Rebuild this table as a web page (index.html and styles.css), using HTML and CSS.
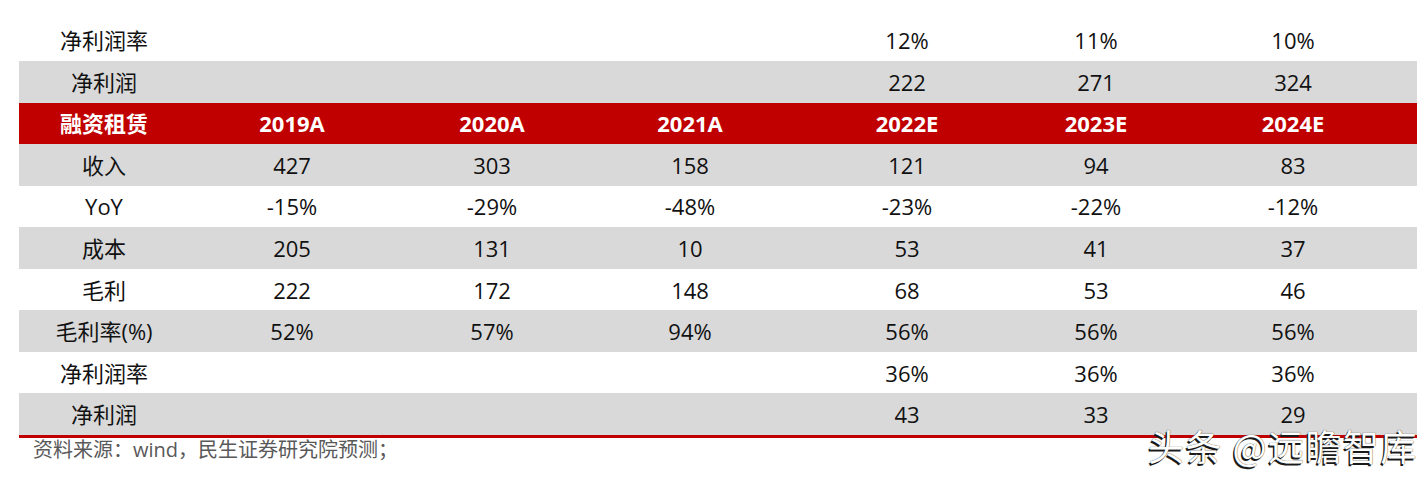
FILE: index.html
```html
<!DOCTYPE html>
<html lang="zh-CN">
<head>
<meta charset="utf-8">
<title>融资租赁</title>
<link rel="stylesheet" href="styles.css">
</head>
<body>
<div class="page">
  <div class="table">
    <div class="row"><div class="cell label">净利润率</div><div class="cell"></div><div class="cell"></div><div class="cell"></div><div class="cell">12%</div><div class="cell">11%</div><div class="cell">10%</div></div>
    <div class="row gray"><div class="cell label">净利润</div><div class="cell"></div><div class="cell"></div><div class="cell"></div><div class="cell">222</div><div class="cell">271</div><div class="cell">324</div></div>
    <div class="row head"><div class="cell label">融资租赁</div><div class="cell">2019A</div><div class="cell">2020A</div><div class="cell">2021A</div><div class="cell">2022E</div><div class="cell">2023E</div><div class="cell">2024E</div></div>
    <div class="row gray"><div class="cell label">收入</div><div class="cell">427</div><div class="cell">303</div><div class="cell">158</div><div class="cell">121</div><div class="cell">94</div><div class="cell">83</div></div>
    <div class="row"><div class="cell label">YoY</div><div class="cell">-15%</div><div class="cell">-29%</div><div class="cell">-48%</div><div class="cell">-23%</div><div class="cell">-22%</div><div class="cell">-12%</div></div>
    <div class="row gray"><div class="cell label">成本</div><div class="cell">205</div><div class="cell">131</div><div class="cell">10</div><div class="cell">53</div><div class="cell">41</div><div class="cell">37</div></div>
    <div class="row"><div class="cell label">毛利</div><div class="cell">222</div><div class="cell">172</div><div class="cell">148</div><div class="cell">68</div><div class="cell">53</div><div class="cell">46</div></div>
    <div class="row gray"><div class="cell label">毛利率(%)</div><div class="cell">52%</div><div class="cell">57%</div><div class="cell">94%</div><div class="cell">56%</div><div class="cell">56%</div><div class="cell">56%</div></div>
    <div class="row"><div class="cell label">净利润率</div><div class="cell"></div><div class="cell"></div><div class="cell"></div><div class="cell">36%</div><div class="cell">36%</div><div class="cell">36%</div></div>
    <div class="row gray last"><div class="cell label">净利润</div><div class="cell"></div><div class="cell"></div><div class="cell"></div><div class="cell">43</div><div class="cell">33</div><div class="cell">29</div></div>
  </div>
  <div class="source">资料来源：wind，民生证券研究院预测；</div>
  <div class="watermark">头条 @远瞻智库</div>
</div>
</body>
</html>
```

FILE: styles.css
```css
html, body {
  margin: 0;
  padding: 0;
  background: #ffffff;
}

.page {
  position: relative;
  width: 1427px;
  height: 479px;
  overflow: hidden;
  padding-top: 19.5px;
  box-sizing: border-box;
  font-family: "Open Sans", "Noto Sans CJK SC", sans-serif;
  color: #111111;
}

.table {
  margin-left: 19px;
  width: 1398px;
  border-bottom: 3px solid #c00000;
}

.row {
  display: grid;
  grid-template-columns: 170px 206px 194px 202px 232px 146px 248px;
  height: 41.55px;
  align-items: center;
}

.row.gray {
  background: #d9d9d9;
}

.row.head {
  background: #c00000;
  color: #ffffff;
  font-weight: 700;
}

.cell {
  text-align: center;
  font-size: 22px;
  line-height: 30px;
  white-space: nowrap;
}

.source {
  padding-left: 33px;
  font-family: "Open Sans", "Noto Sans CJK SC", sans-serif;
  font-size: 20px;
  line-height: 24px;
  color: #595959;
}

.watermark {
  position: absolute;
  left: 1148px;
  top: 423px;
  font-family: "Noto Sans CJK SC", sans-serif;
  font-size: 36px;
  line-height: 44px;
  letter-spacing: 1.5px;
  color: #ffffff;
  white-space: nowrap;
  text-shadow: -1.5px 1.5px 0 #1a1a1a, 0 0 1px #000000;
}
```
